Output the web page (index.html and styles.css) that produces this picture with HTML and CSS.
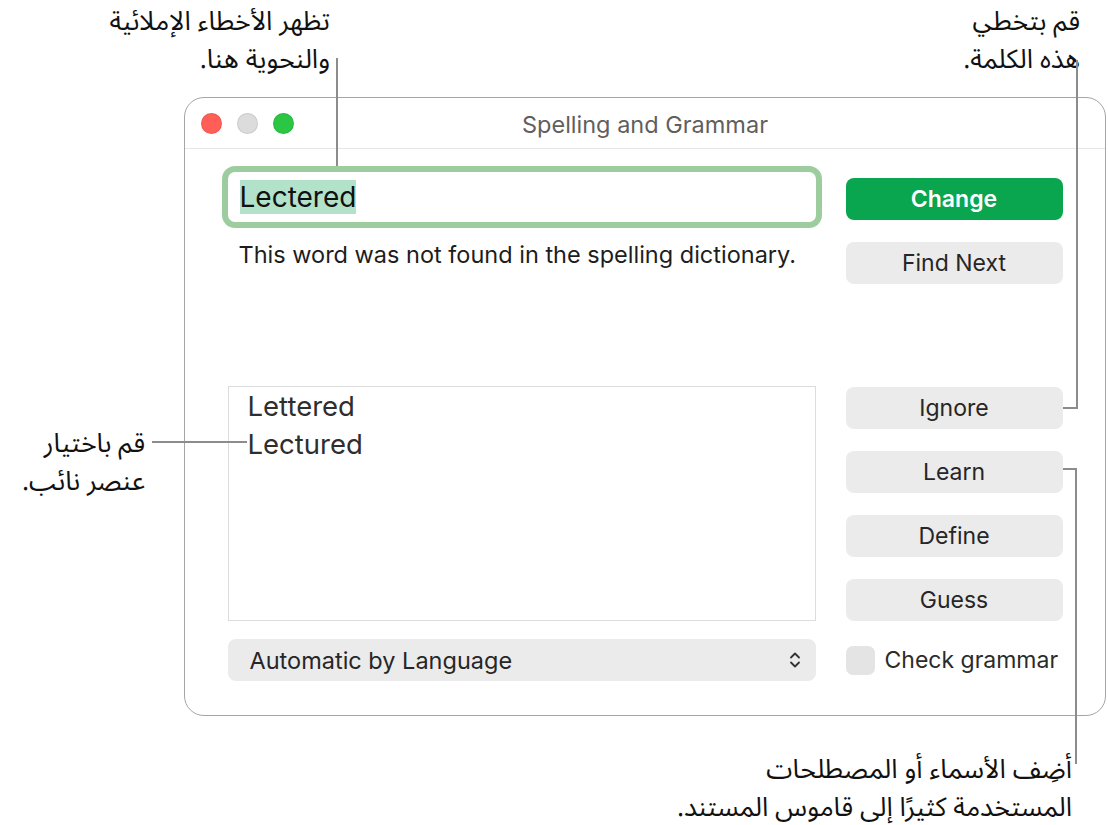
FILE: index.html
```html
<!DOCTYPE html>
<html lang="en">
<head>
    <meta charset="UTF-8">
    <meta name="viewport" content="width=device-width, initial-scale=1.0">
    <title>Spelling and Grammar</title>
    <link rel="stylesheet" href="styles.css">
</head>
<body>
    <div class="stage">
        <!-- Callouts -->
        <p class="note note-errors" dir="rtl">تظهر الأخطاء الإملائية<br>والنحوية هنا.</p>
        <p class="note note-ignore" dir="rtl">قم بتخطي<br>هذه الكلمة.</p>
        <p class="note note-choose" dir="rtl">قم باختيار<br>عنصر نائب.</p>
        <p class="note note-learn" dir="rtl">أضِف الأسماء أو المصطلحات<br>المستخدمة كثيرًا إلى قاموس المستند.</p>

        <div class="leader leader-errors"></div>
        <div class="leader leader-ignore"></div>
        <div class="leader leader-learn"></div>
        <div class="leader leader-choose"></div>

        <div class="window">
            <div class="titlebar">
                <div class="lights">
                    <span class="light red"></span>
                    <span class="light off"></span>
                    <span class="light green"></span>
                </div>
                <div class="title">Spelling and Grammar</div>
                <div></div>
            </div>

            <div class="panel">
                <div class="main-col">
                    <div class="word-field"><span class="word">Lectered</span></div>
                    <p class="status">This word was not found in the spelling dictionary.</p>
                    <ul class="guesses">
                        <li>Lettered</li>
                        <li>Lectured</li>
                    </ul>
                    <div class="popup">
                        <span>Automatic by Language</span>
                        <svg width="12" height="18" viewBox="0 0 12 18">
                            <path d="M2 6.5 L6 2.5 L10 6.5 M2 11.5 L6 15.5 L10 11.5" fill="none" stroke="#333" stroke-width="1.8" stroke-linecap="round" stroke-linejoin="round"/>
                        </svg>
                    </div>
                </div>

                <div class="side-col">
                    <button class="btn btn-primary">Change</button>
                    <button class="btn">Find Next</button>
                    <button class="btn btn-ignore">Ignore</button>
                    <button class="btn">Learn</button>
                    <button class="btn">Define</button>
                    <button class="btn">Guess</button>
                    <label class="check"><span class="box"></span>Check grammar</label>
                </div>
            </div>
        </div>
    </div>
</body>
</html>
```

FILE: styles.css
```css
body {
    margin: 0;
    background: #fff;
    font-family: Inter, "Liberation Sans", sans-serif;
    color: #222;
}

.stage {
    position: relative;
    width: 1108px;
    height: 825px;
    padding: 97px 0 0 184px;
    box-sizing: border-box;
}

/* Callout texts */
.note {
    position: absolute;
    margin: 0;
    font-family: "Noto Sans Arabic UI", "Noto Sans Arabic", "DejaVu Sans", sans-serif;
    font-size: 26.5px;
    line-height: 38px;
    color: #111;
    text-align: right;
    white-space: nowrap;
}

.note-errors { right: 778px; top: 1px; }
.note-ignore { right: 28px; top: 1px; }
.note-choose { right: 963px; top: 423px; }
.note-learn  { right: 36px; top: 749px; }

/* Leader lines */
.leader {
    position: absolute;
    border: 0 solid #8c8c8c;
    z-index: 2;
}

.leader-errors {
    left: 336px;
    top: 58px;
    width: 0;
    height: 108px;
    border-left-width: 2px;
}

.leader-ignore {
    left: 1063px;
    top: 60px;
    width: 13px;
    height: 347px;
    border-right-width: 2px;
    border-bottom-width: 2px;
}

.leader-learn {
    left: 1063px;
    top: 468px;
    width: 12px;
    height: 294px;
    border-top-width: 2px;
    border-right-width: 2px;
}

.leader-choose {
    left: 152px;
    top: 441px;
    width: 95px;
    height: 0;
    border-top-width: 2px;
}

/* Window */
.window {
    width: 922px;
    height: 619px;
    box-sizing: border-box;
    border: 1.5px solid #a5a5a5;
    border-radius: 20px;
    background: #fff;
}

.titlebar {
    display: grid;
    grid-template-columns: 1fr auto 1fr;
    align-items: center;
    height: 50px;
    border-bottom: 1px solid #e6e6e6;
}

.lights {
    display: flex;
    gap: 15px;
    padding-left: 16px;
}

.light {
    width: 21px;
    height: 21px;
    border-radius: 50%;
    box-sizing: border-box;
    border: 1px solid rgba(0, 0, 0, 0.08);
}

.light.red { background: #ff5f57; }
.light.off { background: #dcdcdc; }
.light.green { background: #2ac644; }

.title {
    font-size: 23.5px;
    color: #5f5f5f;
    padding-top: 2px;
}

.panel {
    display: flex;
    gap: 30px;
    padding-left: 42.5px;
}

.main-col {
    width: 588px;
    display: flex;
    flex-direction: column;
}

.word-field {
    margin-top: 23px;
    height: 50px;
    box-sizing: border-box;
    padding: 8px 12px;
    border-radius: 7px;
    background: #fff;
    box-shadow: 0 0 0 6px #9dcc9f;
}

.word {
    display: inline-block;
    background: #b2e2ca;
    font-size: 28px;
    line-height: 34px;
    color: #111;
}

.status {
    margin: 21px 0 0;
    padding-left: 11px;
    font-size: 23.5px;
    line-height: 24px;
    color: #1d1d1d;
}

.guesses {
    list-style: none;
    margin: 119px 0 0;
    padding: 0 0 0 19px;
    height: 235px;
    box-sizing: border-box;
    border: 1.5px solid #dcdcdc;
    font-size: 27.5px;
    line-height: 38px;
    color: #2e2e2e;
}

.popup {
    margin-top: 18px;
    height: 42px;
    display: flex;
    align-items: center;
    justify-content: space-between;
    padding: 0 15px 0 22px;
    border-radius: 8px;
    background: #ebebeb;
    font-size: 23.5px;
    color: #262626;
}

.side-col {
    width: 217px;
    display: flex;
    flex-direction: column;
    gap: 22px;
}

.btn {
    height: 42px;
    border: none;
    border-radius: 8px;
    background: #ebebeb;
    font-family: inherit;
    font-size: 23px;
    color: #262626;
    padding: 0;
}

.btn-primary {
    margin-top: 29px;
    background: #09a64f;
    color: #fff;
    font-weight: 600;
}

.btn-ignore {
    margin-top: 81px;
}

.check {
    margin-top: -4px;
    height: 42px;
    display: flex;
    align-items: center;
    gap: 10px;
    font-size: 23px;
    color: #2b2b2b;
}

.box {
    width: 29px;
    height: 29px;
    border-radius: 7px;
    background: #e4e4e4;
}
```
